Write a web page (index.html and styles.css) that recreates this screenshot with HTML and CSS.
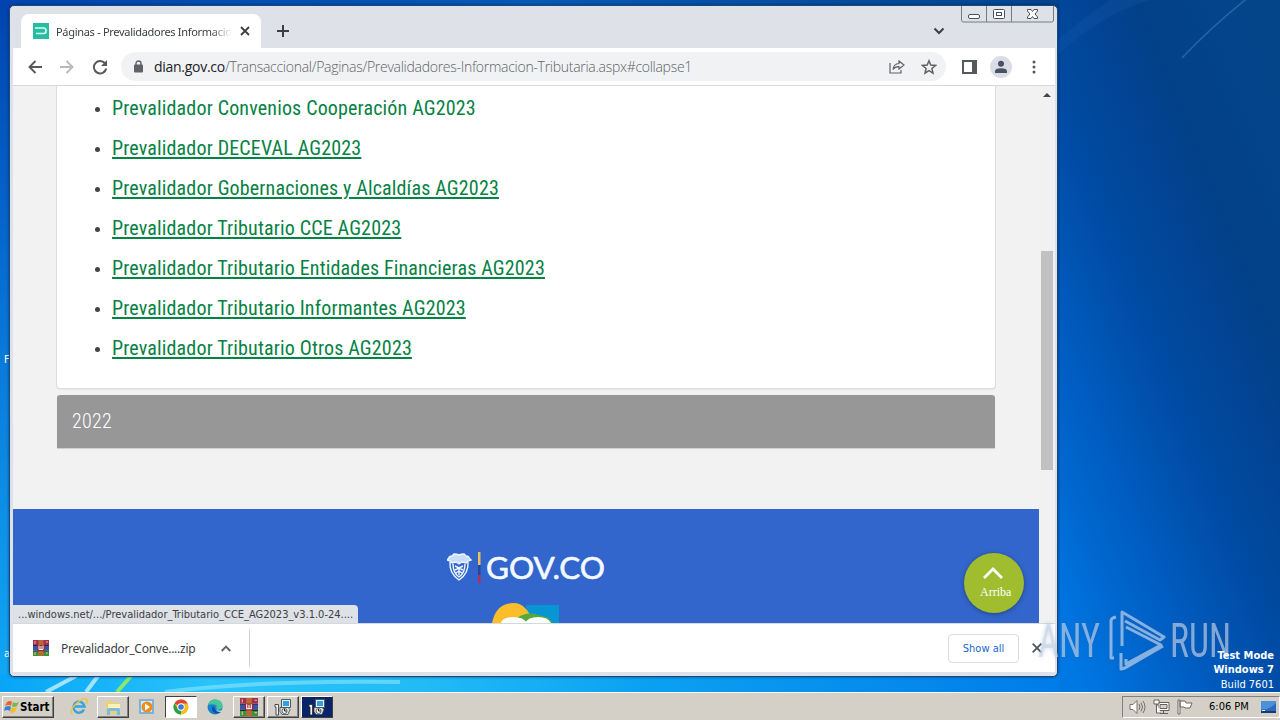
FILE: index.html
```html
<!DOCTYPE html>
<html lang="es">
<head>
    <meta charset="UTF-8">
    <meta name="viewport" content="width=device-width, initial-scale=1.0">
    <title>Páginas - Prevalidadores Informacion Tributaria</title>
    <link rel="stylesheet" href="styles.css">
</head>
<body>
    <div class="desktop">
        <svg class="wallpaper" width="1280" height="692" viewBox="0 0 1280 692">
            <defs>
                <linearGradient id="leftEdge" x1="0" y1="0" x2="0" y2="1">
                    <stop offset="0" stop-color="#0043ae"/>
                    <stop offset=".45" stop-color="#0873d7"/>
                    <stop offset="1" stop-color="#12a9f5"/>
                </linearGradient>
                <linearGradient id="topEdge" x1="0" y1="0" x2="1" y2="0">
                    <stop offset="0" stop-color="#0044ae"/>
                    <stop offset=".5" stop-color="#0759b5"/>
                    <stop offset="1" stop-color="#04438d"/>
                </linearGradient>
                <linearGradient id="rightSide" gradientUnits="userSpaceOnUse" x1="1050" y1="620" x2="1419" y2="472">
                    <stop offset="0" stop-color="#0078e4"/>
                    <stop offset=".25" stop-color="#0060c6"/>
                    <stop offset=".5" stop-color="#004ba4"/>
                    <stop offset=".78" stop-color="#034089"/>
                    <stop offset="1" stop-color="#04458a"/>
                </linearGradient>
                <linearGradient id="bottomEdge" x1="0" y1="0" x2="1" y2="0">
                    <stop offset="0" stop-color="#08a5f7"/>
                    <stop offset=".2" stop-color="#29c4fa"/>
                    <stop offset=".4" stop-color="#22bbf6"/>
                    <stop offset=".6" stop-color="#0ba2f2"/>
                    <stop offset="1" stop-color="#007ce8"/>
                </linearGradient>
            </defs>
            <rect width="1280" height="692" fill="url(#rightSide)"/>
            <rect width="1060" height="10" fill="url(#topEdge)"/>
            <rect width="12" height="692" fill="url(#leftEdge)"/>
            <rect y="674" width="1060" height="18" fill="url(#bottomEdge)"/>
            <path d="M1250 -4Q1210 28 1182 58" stroke="#5b95cc" stroke-width="1.500" fill="none" opacity=".4"/>
            <path d="M1058 55Q1100 15 1150 0H1110Q1080 20 1058 40z" fill="#1c66b3" opacity=".2"/>
            <path d="M46 692L76 676M86 692L98 676" stroke="#c6f0fd" stroke-width="4" opacity=".8"/>
            <path d="M117 692L131 676" stroke="#86e96b" stroke-width="4"/>
            <path d="M165 692Q260 680 400 682" stroke="#8ce5fb" stroke-width="4" fill="none" opacity=".6"/>
        </svg>
        <span class="desktop-label label-f">F</span>
        <span class="desktop-label label-a">a</span>

        <div class="window">
            <div class="tab-strip">
                <div class="tab">
                    <svg class="favicon" width="16" height="16" viewBox="0 0 16 16">
                        <rect width="16" height="16" fill="#27bda0"/>
                        <path d="M2 5h9q2 0 2 2.700t-2 2.800H3" fill="none" stroke="#d6fff3" stroke-width="1.700"/>
                    </svg>
                    <span class="tab-title">Páginas - Prevalidadores Informacion</span>
                    <svg width="10" height="10" viewBox="0 0 10 10"><path d="M1 1l8 8M9 1L1 9" stroke="#3c4043" stroke-width="1.8"/></svg>
                </div>
                <svg class="new-tab" width="12" height="12" viewBox="0 0 12 12"><path d="M6 0v12M0 6h12" stroke="#3c4043" stroke-width="2"/></svg>
                <svg class="tab-search" width="12" height="8" viewBox="0 0 12 8"><path d="M1.500 1.500L6 6l4.500-4.500" fill="none" stroke="#3c4043" stroke-width="2"/></svg>
                <svg class="window-buttons" width="93" height="18" viewBox="0 0 93 18" fill="none" stroke="#747a88">
                    <path d="M.5 0v14q0 2 2 2h88q2 0 2-2V0M25.500 0v16M50.500 0v16"/>
                    <g fill="#fff" stroke="#4a4f60">
                        <rect x="7.500" y="8.500" width="11" height="4" rx="1.500"/>
                        <rect x="32.500" y="3.500" width="11" height="9" rx="1"/>
                        <rect x="35.500" y="6.500" width="5" height="3"/>
                        <path d="M66.500 3.500h3.500l1.500 2 1.500-2h3.500v1.500L74 8l2.500 3v1.500H73l-1.500-2-1.500 2h-3.500V11L69 8l-2.500-3z"/>
                    </g>
                </svg>
            </div>

            <div class="toolbar">
                <svg class="nav-icon" width="14" height="14" viewBox="0 0 14 14" fill="none" stroke="#55585c" stroke-width="1.900"><path d="M14 7H1.500M7.500 1l-6 6 6 6"/></svg>
                <svg class="nav-icon" width="14" height="14" viewBox="0 0 14 14" fill="none" stroke="#bababa" stroke-width="1.900"><path d="M0 7h12.500M6.500 1l6 6-6 6"/></svg>
                <svg class="nav-icon" width="16" height="16" viewBox="0 0 16 16"><path d="M13.300 4.800A6.200 6.200 0 1 0 14.200 9.500" fill="none" stroke="#55585c" stroke-width="2"/><path d="M15 1v6H9z" fill="#55585c"/></svg>
                <div class="omnibox">
                    <svg width="10" height="13" viewBox="0 0 10 13"><rect y="4.500" width="9" height="8" rx="1" fill="#5f6368"/><path d="M2 5V3.500a2.500 2.500 0 0 1 5 0V5" fill="none" stroke="#5f6368" stroke-width="1.400"/></svg>
                    <span class="url"><b>dian.gov.co</b>/Transaccional/Paginas/Prevalidadores-Informacion-Tributaria.aspx#collapse1</span>
                    <svg width="16" height="14" viewBox="0 0 16 14" fill="none" stroke="#5f6368" stroke-width="1.200"><path d="M1 3v10h11v-3"/><path d="M10 1l5 4-5 4V6.700Q6 6.500 4 9.500 4.500 4 10 3.500z"/></svg>
                    <svg class="star" width="16" height="16" viewBox="0 0 16 16"><path d="M8 1.800l1.800 4.300 4.700.4-3.600 3 1.100 4.600L8 11.700l-4 2.400 1.100-4.600-3.600-3 4.700-.4z" fill="none" stroke="#5f6368" stroke-width="1.500"/></svg>
                </div>
                <svg class="side-panel" width="15" height="14" viewBox="0 0 15 14"><path d="M1 1h13v12H1z" fill="#fff" stroke="#55585c" stroke-width="2"/><path d="M10 0h5v14h-5z" fill="#55585c"/></svg>
                <svg class="avatar" width="22" height="22" viewBox="0 0 22 22"><circle cx="11" cy="11" r="11" fill="#dadde5"/><circle cx="11" cy="7.800" r="3" fill="#4a5163"/><path d="M5 17v-1.800q0-3 6-3t6 3V17z" fill="#4a5163"/></svg>
                <svg class="menu" width="4" height="14" viewBox="0 0 4 14" fill="#55585c"><circle cx="2" cy="2" r="1.500"/><circle cx="2" cy="7" r="1.500"/><circle cx="2" cy="12" r="1.500"/></svg>
            </div>

            <div class="viewport">
                <div class="page">
                    <div class="panel">
                        <ul class="files">
                            <li><a class="hovered">Prevalidador Convenios Cooperación AG2023</a></li>
                            <li><a>Prevalidador DECEVAL AG2023</a></li>
                            <li><a>Prevalidador Gobernaciones y Alcaldías AG2023</a></li>
                            <li><a>Prevalidador Tributario CCE AG2023</a></li>
                            <li><a>Prevalidador Tributario Entidades Financieras AG2023</a></li>
                            <li><a>Prevalidador Tributario Informantes AG2023</a></li>
                            <li><a>Prevalidador Tributario Otros AG2023</a></li>
                        </ul>
                    </div>
                    <div class="year"><span>2022</span></div>
                    <div class="footer">
                        <svg class="govco" width="160" height="34" viewBox="0 0 160 34">
                            <g fill="none" stroke="#edf5ff" stroke-width="1.400">
                                <path d="M2 7q0-2 3-2l2-2q3 0 5 1 2-1 5-1l2 2q3 0 3 2l2 2-3 1-2 2-4-1-3 2-3-2-4 1-2-2-3-1z" fill="#c9dcf8"/>
                                <path d="M3 11q-1 11 9 18 10-7 9-18M6 13q0 9 6 13 6-4 6-13M8 15l4 2 4-2M8 19l4-2 4 2M9 22l3-2 3 2M12 17v7"/>
                            </g>
                            <path d="M31 1h2.500v13H31z" fill="#e9c15b"/>
                            <path d="M31 14h2.500v10H31z" fill="#27469a"/>
                            <path d="M31 24h2.500v8H31z" fill="#b52e59"/>
                            <text class="govco-text" x="39" y="28" textLength="119" lengthAdjust="spacingAndGlyphs">GOV.CO</text>
                        </svg>
                        <svg class="brand" width="68" height="20" viewBox="0 0 68 20">
                            <path d="M34 2h33v18H34z" fill="#0796d4"/>
                            <path d="M0 20Q4 0 22 0q12 0 20 20z" fill="#fcbd2b"/>
                            <path d="M25 15q8-6 18-4l14 4 3 5H25z" fill="#54a83c"/>
                            <path d="M9 20q1-6 12-6t14 6zM33 20q3-6 13-6t13 6z" fill="#fff"/>
                        </svg>
                    </div>
                </div>
                <div class="scrollbar">
                    <svg width="8" height="4" viewBox="0 0 8 4"><path d="M0 4l4-4 4 4z" fill="#444"/></svg>
                    <div class="thumb"></div>
                </div>
                <div class="go-up">
                    <svg width="20" height="12" viewBox="0 0 20 12"><path d="M1 11l9-9 9 9" fill="none" stroke="#fff" stroke-width="2.800"/></svg>
                    <span>Arriba</span>
                </div>
                <div class="status">...windows.net/.../Prevalidador_Tributario_CCE_AG2023_v3.1.0-24....</div>
            </div>

            <div class="downloads">
                <svg width="16" height="16" viewBox="0 0 16 16"><use href="#rar"/></svg>
                <span class="file-name">Prevalidador_Conve....zip</span>
                <svg class="file-menu" width="10" height="7" viewBox="0 0 10 7"><path d="M.7 6L5 1.700 9.300 6" fill="none" stroke="#5f6368" stroke-width="1.900"/></svg>
                <div class="divider"></div>
                <div class="show-all"><span>Show all</span></div>
                <svg class="close-bar" width="10" height="10" viewBox="0 0 10 10"><path d="M.7.7l8.600 8.600M9.300.7L.7 9.300" stroke="#55585c" stroke-width="1.900"/></svg>
            </div>
        </div>

        <svg class="watermark" width="200" height="66" viewBox="0 0 200 66">
            <g class="watermark-text">
                <text x="2" y="49" textLength="62" lengthAdjust="spacingAndGlyphs">ANY</text>
                <text x="134" y="49" textLength="61" lengthAdjust="spacingAndGlyphs">RUN</text>
            </g>
            <g fill="none" stroke="#b9d3f3" stroke-width="3" stroke-linejoin="round" opacity=".7">
                <path d="M78 50h-3V13q0-3 5-4"/>
                <path d="M86 38V4l42 25-4 3-35-19"/>
                <path d="M90 19l35 18-35 19v-5M85 45v16l4-1 38-22"/>
            </g>
        </svg>
        <div class="build">
            <b>Test Mode</b>
            <b>Windows 7</b>
            <span>Build 7601</span>
        </div>
    </div>

    <div class="taskbar">
        <div class="start">
            <svg width="16" height="16" viewBox="0 0 16 16">
                <path d="M3 3q3-2 5 0L7 7Q5 5 1 7z" fill="#ed6330"/>
                <path d="M9 3q3 2 6 0l-2 4q-3 2-5 0z" fill="#78b943"/>
                <path d="M1 8q4-2 6 0l-1 4q-3-2-6 0z" fill="#3485d6"/>
                <path d="M8 8q2 2 5 0l-2 5q-3 2-5 0z" fill="#f6ba2d"/>
            </svg>
            <b>Start</b>
        </div>
        <div class="task">
            <svg width="18" height="18" viewBox="0 0 18 18"><path d="M14 11.500A5.500 5.500 0 1 1 14.500 8.500H5" fill="none" stroke="#36a5df" stroke-width="2.500"/><path d="M2 16Q-1 12 7 5t10-3q1 1-1 4" fill="none" stroke="#edc345" stroke-width="1.500"/></svg>
        </div>
        <div class="task raised">
            <svg width="18" height="18" viewBox="0 0 18 18"><path d="M2 3h6l2 2h6v11H2z" fill="#ead078"/><path d="M4 6h12v7H4z" fill="#fff2b7"/><path d="M3 17v-6q0-1 2-1h9q2 0 2 1v6h-3v-4H6v4z" fill="#78bce1"/></svg>
        </div>
        <div class="task">
            <svg width="18" height="18" viewBox="0 0 18 18"><rect x="1" y="1" width="15" height="15" fill="#79b4dd"/><rect x="3" y="3" width="11" height="11" fill="#d9eaf4"/><circle cx="9" cy="9" r="5.500" fill="#f18b1c"/><path d="M7 5.500v7l5-3.500z" fill="#fff"/></svg>
        </div>
        <div class="task pressed">
            <svg width="16" height="16" viewBox="0 0 16 16"><circle cx="8" cy="8" r="7.500" fill="#f4bd22"/><path d="M8 8L1.500 4.200A7.500 7.500 0 0 1 14.700 4.500H8z" fill="#df4334"/><path d="M8 8v7.500A7.500 7.500 0 0 1 1.500 4.200L5 10z" fill="#2ca04c"/><circle cx="8" cy="8" r="3.700" fill="#fff"/><circle cx="8" cy="8" r="2.800" fill="#3978df"/></svg>
        </div>
        <div class="task">
            <svg width="18" height="18" viewBox="0 0 18 18"><circle cx="9" cy="9" r="7.500" fill="#1681cf"/><path d="M2 7Q4 1 10 1.500q7 1 6.500 7-1 4-6 3 2-3-1-4.500T2 7z" fill="#43c79b"/><path d="M7 8q-3 4 2 7 4 1 6-1-5 1-6-3z" fill="#0b4e9b"/><path d="M10 8q1 1 0 3.500 3 2 6 .5l-1 2q-6 0-5-6z" fill="#d4d0c8"/></svg>
        </div>
        <div class="task raised">
            <svg width="18" height="18" viewBox="0 0 16 16">
                <g id="rar">
                    <path d="M0 0h16v5H0z" fill="#a72d54"/><path d="M0 5.500h16v5H0z" fill="#3554ad"/><path d="M0 11h16v5H0z" fill="#3a943c"/>
                    <path d="M0 5h16v1H0zM0 10.500h16v1H0z" fill="#282b36"/>
                    <path d="M5.500 0h5v16h-5z" fill="#b76a32"/><path d="M4.500 5h7v6h-7z" fill="#a02330"/>
                    <path d="M6 5.500v4h4v-4M8 6v3" fill="none" stroke="#fff" stroke-width="1"/>
                    <path d="M2 1v3M13 2h2M2 12v3M13 13h2" stroke="#eac368"/>
                </g>
            </svg>
        </div>
        <div class="task raised"><svg width="18" height="18" viewBox="0 0 18 18"><use href="#setup"/></svg></div>
        <div class="task flashing">
            <svg width="18" height="18" viewBox="0 0 18 18">
                <g id="setup">
                    <path d="M7.500 1.500h9v8h-9z" fill="#e8edf0" stroke="#4e5a66"/><path d="M9 3h6v5H9z" fill="#33a1e0"/>
                    <path d="M1 6.500h3.500V17H2V9H1z" fill="#f1f1ec" stroke="#222b32" stroke-width=".8"/>
                    <path d="M6 9.500h8l2 2-2 5H8l-2-3z" fill="#dce1e2" stroke="#444" stroke-width=".8"/>
                    <circle cx="10.500" cy="13" r="2.500" fill="#f5f5f5" stroke="#58656a"/><path d="M10.500 11v2h2" stroke="#222" fill="none"/>
                </g>
            </svg>
        </div>
        <div class="tray">
            <svg width="17" height="16" viewBox="0 0 17 16" fill="#fff" stroke="#77736c"><path d="M1 5.500h3l4-4v13l-4-4H1z"/><path d="M10 5q2 3 0 6M12 3.500q3 4.500 0 9M14 2q4 6 0 12" fill="none"/></svg>
            <svg width="17" height="16" viewBox="0 0 17 16" fill="#fff" stroke="#65615b"><path d="M5 3.500h11v8H5z"/><path d="M7 5.500h7v4H7z" fill="#d4d0c8"/><path d="M1 1h5v4H1zM3.500 5v9H8M7 14.500h8M10.500 12v2" /></svg>
            <svg width="17" height="16" viewBox="0 0 17 16" fill="#fff" stroke="#6c6862"><path d="M1 1h2v14H1zM3 2h5l1 2h6l-2 5H8L7 8H3z"/></svg>
            <span class="clock">6:06 PM</span>
            <svg width="15" height="12" viewBox="0 0 15 12"><path d="M0 0h15v11H0z" fill="#2d68bd"/><path d="M0 8q7 2 15-6V0H0z" fill="#4a91db"/><path d="M0 10h15v2H0z" fill="#173b77"/><path d="M1 9h3v1H1z" fill="#fff"/></svg>
        </div>
    </div>
</body>
</html>
```

FILE: styles.css
```css
body {
    margin: 0;
    width: 1280px;
    height: 720px;
    overflow: hidden;
    display: flex;
    flex-direction: column;
    font-family: "DejaVu Sans Condensed", "DejaVu Sans", sans-serif;
    font-size: 11px;
}
svg {
    display: block;
    flex: none;
}
.desktop {
    position: relative;
    height: 692px;
}
.desktop-label {
    position: absolute;
    left: 4px;
    color: #fff;
}
.label-f { top: 353px; }
.label-a { top: 647px; }

/* browser window */
.window {
    position: absolute;
    left: 9px;
    top: 5px;
    width: 1042px;
    height: 667px;
    padding: 0 2px 3px 3px;
    border: 1px solid #174a7c;
    border-radius: 5px;
    background: #dee1e8;
    display: flex;
    flex-direction: column;
    box-shadow: 0 0 3px rgba(0,20,60,0.6);
}
.tab-strip {
    height: 42px;
    display: flex;
    align-items: flex-start;
}
.tab {
    width: 240px;
    height: 34px;
    margin: 8px 0 0 8px;
    padding: 0 11px 0 12px;
    box-sizing: border-box;
    border-radius: 8px 8px 0 0;
    background: #fff;
    display: flex;
    align-items: center;
}
.tab-title {
    width: 176px;
    margin: 0 8px 0 7px;
    overflow: hidden;
    white-space: nowrap;
    color: #3c4043;
    font-family: "Noto Sans", sans-serif;
    letter-spacing: -0.3px;
    -webkit-mask-image: linear-gradient(90deg, #000 88%, transparent);
    mask-image: linear-gradient(90deg, #000 88%, transparent);
}
.new-tab { margin: 19px 0 0 16px; }
.tab-search { margin: 21px 0 0 auto; }
.window-buttons { margin: 0 1px 0 16px; }
.toolbar {
    height: 37px;
    border-bottom: 1px solid #d5d8dc;
    background: #fff;
    display: flex;
    align-items: center;
    padding-left: 15px;
}
.nav-icon { margin-right: 18px; }
.omnibox {
    width: 825px;
    height: 29px;
    margin-left: -5px;
    padding: 0 9px 0 13px;
    box-sizing: border-box;
    border-radius: 15px;
    background: #f0f2f4;
    display: flex;
    align-items: center;
}
.url {
    flex: 1;
    margin-left: 10px;
    white-space: nowrap;
    color: #5f6368;
    font-family: "Open Sans", "Noto Sans", sans-serif;
    font-size: 14px;
    font-weight: 300;
    letter-spacing: -0.28px;
}
.url b {
    color: #202124;
    font-weight: 400;
}
.star { margin-left: 16px; }
.side-panel { margin-left: 16px; }
.avatar { margin-left: 13px; }
.menu { margin-left: 20px; }

/* page content */
.viewport {
    position: relative;
    height: 537px;
    display: flex;
    background: #f2f2f2;
    overflow: hidden;
}
.page {
    width: 1026px;
}
.panel {
    height: 302px;
    width: 938px;
    margin-left: 43px;
    border: 1px solid #ddd;
    border-top: 0;
    border-radius: 0 0 4px 4px;
    background: #fff;
    box-shadow: 0 1px 1px rgba(0,0,0,0.05);
}
.files {
    margin: 0;
    padding: 2px 0 0 55px;
    color: #444;
    font-family: "Roboto Condensed", Roboto, sans-serif;
    font-stretch: 75%;
    font-size: 20px;
    letter-spacing: 0.16px;
    line-height: 40px;
}
.files li::marker { font-size: 16px; }
.files a {
    color: #068244;
    text-decoration: underline;
    text-decoration-thickness: 2px;
    text-underline-offset: 2px;
}
.files .hovered { text-decoration: none; }
.year {
    width: 938px;
    height: 53px;
    margin: 6px 0 0 44px;
    border-radius: 3px 3px 0 0;
    background: #979797;
    color: #fff;
    font-family: "Roboto Condensed", Roboto, sans-serif;
    font-stretch: 75%;
    font-size: 20px;
    font-weight: 300;
    letter-spacing: 0.3px;
    line-height: 53px;
    box-shadow: 0 1px 1px rgba(0,0,0,0.15);
}
.year span { margin-left: 15px; }
.footer {
    height: 114px;
    margin-top: 61px;
    background: #3366cc;
}
.govco {
    padding: 42px 0 0 434px;
}
.govco-text {
    fill: #f3f9ff;
    stroke: #f3f9ff;
    stroke-width: 0.6px;
    font-family: Lato, sans-serif;
    font-size: 30px;
}
.brand { margin: 18px 0 0 479px; }
.scrollbar {
    flex: 1;
    background: #f1f1f1;
    padding: 7px 0 0 2px;
}
.scrollbar svg { margin-left: 2px; }
.thumb {
    width: 12px;
    height: 219px;
    margin-top: 154px;
    background: #c1c1c1;
}
.go-up {
    position: absolute;
    left: 951px;
    top: 467px;
    width: 60px;
    height: 60px;
    border-radius: 50%;
    background: #a0bd30;
    box-shadow: 0 1px 5px rgba(0,0,0,0.35);
    color: #fff;
    font-family: "Liberation Serif", serif;
    font-size: 12px;
}
.go-up svg { margin: 14px 0 0 19px; }
.go-up span {
    display: block;
    margin: 6px 0 0 16px;
}
.status {
    position: absolute;
    left: 0;
    bottom: 0;
    width: 345px;
    height: 18px;
    padding-left: 5px;
    box-sizing: border-box;
    border-radius: 0 4px 0 0;
    background: #dee1e6;
    color: #3c4043;
    line-height: 19px;
    white-space: nowrap;
}
.downloads {
    height: 48px;
    border-top: 1px solid #d5d8dc;
    background: #fff;
    display: flex;
    align-items: center;
    padding-left: 20px;
}
.file-name {
    width: 135px;
    margin-left: 12px;
    white-space: nowrap;
    color: #3c4043;
    font-family: "Noto Sans", sans-serif;
    font-size: 12px;
    letter-spacing: -0.25px;
}
.file-menu { margin-left: 25px; }
.divider {
    width: 1px;
    height: 38px;
    margin-left: 18px;
    background: #cfd1d4;
}
.show-all {
    width: 71px;
    height: 29px;
    margin-left: 698px;
    box-sizing: border-box;
    border: 1px solid #dadce0;
    border-radius: 4px;
    color: #1967d2;
    line-height: 27px;
    text-align: center;
}
.close-bar { margin-left: 13px; }
.watermark {
    position: absolute;
    left: 1036px;
    top: 608px;
    filter: drop-shadow(0 0 2px rgba(60,90,130,0.35));
}
.watermark-text {
    fill: #c5d5eb;
    opacity: 0.65;
    font-family: "Roboto Condensed", Roboto, sans-serif;
    font-stretch: 75%;
    font-size: 49px;
}
.build {
    position: absolute;
    right: 6px;
    bottom: -1px;
    color: #fff;
    text-align: right;
    line-height: 14px;
}
.build b, .build span { display: block; }
.build span { line-height: 16px; }

/* taskbar */
.taskbar {
    height: 27px;
    border-top: 1px solid #fff;
    background: #d4d0c8;
    display: flex;
    align-items: center;
    padding-left: 2px;
}
.start {
    width: 52px;
    height: 22px;
    padding-left: 1px;
    box-sizing: border-box;
    border: 1px solid;
    border-color: #fff #404040 #404040 #fff;
    box-shadow: inset -1px -1px #808080;
    display: flex;
    align-items: center;
    font-size: 11.5px;
}
.task {
    width: 32px;
    height: 22px;
    margin-left: 2px;
    box-sizing: border-box;
    border: 1px solid transparent;
    display: flex;
    align-items: center;
    justify-content: center;
}
.start + .task { margin-left: 9px; }
.raised {
    border-color: #fff #404040 #404040 #fff;
    box-shadow: inset -1px -1px #808080;
}
.pressed {
    border-color: #404040 #fff #fff #404040;
    background: #fff;
}
.flashing {
    border-color: #fff #404040 #404040 #fff;
    background: #0a246a;
}
.tray {
    width: 158px;
    height: 22px;
    margin-left: auto;
    padding-left: 6px;
    box-sizing: border-box;
    border: 1px solid;
    border-color: #808080 #fff #fff #808080;
    display: flex;
    align-items: center;
    gap: 7px;
}
.clock {
    width: 40px;
    margin: 0 5px 0 8px;
    white-space: nowrap;
}
```
